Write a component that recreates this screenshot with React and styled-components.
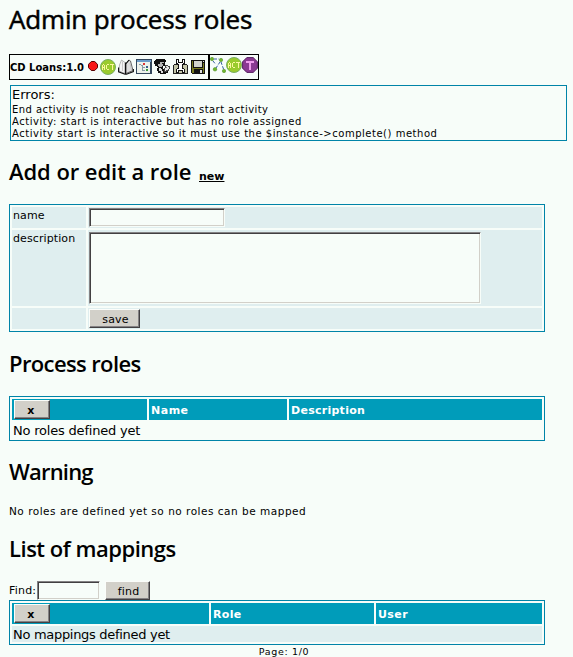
import React from "react";
import styled, { createGlobalStyle } from "styled-components";

const TEAL = "#0084a8";
const HEAD = "#009cba";
const PALE = "#dfeeef";
const PAPER = "#f7fdf9";

const GlobalStyle = createGlobalStyle`
  html, body { margin: 0; background: ${PAPER}; }
  body { overflow: hidden; }
  * { box-sizing: border-box; }
`;

const Page = styled.main`
  width: 573px;
  height: 657px;
  overflow: hidden;
  padding-left: 9px;
  background: ${PAPER};
  color: #000;
  font-family: "DejaVu Sans", Verdana, sans-serif;
  font-size: 11px;
  white-space: nowrap;
`;

const Title = styled.h1`
  margin: 0;
  height: 54px;
  font: 400 26px/38px "Open Sans", "Trebuchet MS", sans-serif;
  letter-spacing: -0.16px;
  -webkit-text-stroke: 0.5px #000;
`;

const Heading = styled.h2`
  margin: 0;
  height: ${(p) => p.$height}px;
  font: 600 22px/${(p) => p.$line}px "Open Sans", "Trebuchet MS", sans-serif;
  letter-spacing: ${(p) => p.$track || 0}px;
`;

const NewLink = styled.a`
  margin-left: 2px;
  color: #000;
  font: bold 11px "DejaVu Sans", sans-serif;
  letter-spacing: 0;
  text-decoration: underline;
`;

const Toolbar = styled.div`
  display: flex;
  width: 250px;
  height: 26px;
  border: 1px solid #000;
`;

const ProcessCell = styled.div`
  display: flex;
  align-items: center;
  width: 200px;
  border-right: 2px solid #000;
  padding-bottom: 1px;
`;

const ProcessName = styled.b`
  width: 78px;
  padding-top: 2px;
  font-size: 10px;
`;

const GraphCell = styled.div`
  display: flex;
  padding-top: 2px;
`;

const Icon = styled.svg`
  display: block;
  flex: none;
  width: ${(p) => p.$w || 16}px;
  height: ${(p) => p.$h || 16}px;
  margin-right: ${(p) => p.$gap || 0}px;
  margin-bottom: ${(p) => p.$lift || 0}px;
`;

const ErrorBox = styled.section`
  width: 557px;
  height: 56px;
  margin: 5px 0 0 1px;
  padding-left: 1px;
  border: 1px solid ${TEAL};
`;

const ErrorTitle = styled.div`
  font-size: 13px;
  line-height: 18px;
`;

const ErrorLine = styled.div`
  font-size: 10px;
  line-height: 12px;
  letter-spacing: ${(p) => p.$track || 0}px;
`;

const Table = styled.div`
  display: grid;
  width: 536px;
  grid-template-columns: ${(p) => p.$cols};
  grid-template-rows: ${(p) => p.$rows};
  gap: 2px;
  padding: 2px;
  border: 1px solid ${TEAL};
`;

const Cell = styled.div`
  background: ${PALE};
  padding: 1px;
`;

const LabelCell = styled(Cell)`
  line-height: 16px;
  letter-spacing: 0.1px;
`;

const HeadCell = styled.div`
  display: flex;
  align-items: center;
  background: ${HEAD};
  color: #fff;
  padding: 1px 2px 0;
  font-weight: bold;
  letter-spacing: ${(p) => p.$track || 0}px;
`;

const EmptyRow = styled.div`
  grid-column: 1 / -1;
  padding-left: 1px;
  background: ${(p) => (p.$shaded ? PALE : "transparent")};
  font-size: 13px;
  line-height: 17px;
  letter-spacing: ${(p) => p.$track || 0}px;
`;

const bevelIn = `
  display: block;
  margin: 0;
  padding: 0;
  outline: 0;
  border: 1px solid;
  border-color: #848284 #f7fdf9 #f7fdf9 #848284;
  border-radius: 0;
  background: ${PAPER};
  box-shadow: inset 1px 1px #424042, inset -1px -1px #d2d0c9;
`;

const TextInput = styled.input`
  ${bevelIn}
  width: ${(p) => p.$w}px;
  height: 19px;
`;

const TextArea = styled.textarea`
  ${bevelIn}
  width: 392px;
  height: 72px;
  margin-top: 1px;
  resize: none;
`;

const Button = styled.button`
  display: block;
  width: ${(p) => p.$w}px;
  height: 19px;
  margin: 0;
  padding: 1px 0 0 2px;
  border: 1px solid;
  border-color: #fbfdfa #424042 #424042 #fbfdfa;
  border-radius: 0;
  background: #d2d0c9;
  box-shadow: inset -1px -1px #848284;
  color: #000;
  font: normal 11px/15px "DejaVu Sans", sans-serif;
  letter-spacing: 0.2px;
`;

const HeadButton = styled(Button)`
  margin-top: -1px;
  padding: 1px 2px 0 0;
  font-weight: bold;
`;

const Note = styled.p`
  margin: 0;
  font-size: 10.5px;
  line-height: 19px;
  letter-spacing: 0.51px;
`;

const FindRow = styled.div`
  display: flex;
  height: 19px;
`;

const FindLabel = styled.label`
  width: 28px;
  line-height: 20px;
  letter-spacing: 0.2px;
`;

const FindButton = styled(Button)`
  margin-left: 5px;
`;

const Pager = styled.footer`
  width: 550px;
  font-size: 9.5px;
  line-height: 13px;
  text-align: center;
  letter-spacing: 0.65px;
`;

const ActIcon = ({ gap }) => (
  <Icon $gap={gap} viewBox="0 0 16 16">
    <circle cx="8" cy="8" r="7.5" fill="#9acb2d" stroke="#79ae62" />
    <path
      d="M2 6H3V5H4V6H5V11H4V9H3V11H2ZM3 6V8H4V6ZM7 5H9V6H7V10H9V11H7V10H6V6H7ZM10 5H14V6H12.5V11H11.5V6H10Z"
      fill="#fbf7a0"
      shapeRendering="crispEdges"
    />
  </Icon>
);

const StopIcon = () => (
  <Icon $w={10} $h={10} $gap={2} $lift={2} viewBox="0 0 10 10">
    <path d="M3.3.5H6.7L9.5 3.3V6.7L6.7 9.5H3.3L.5 6.7V3.3Z" fill="#f81818" stroke="#500" />
  </Icon>
);

const BookIcon = () => (
  <Icon $gap={2} viewBox="0 0 16 16">
    <path d="M1.5 6L3.5 1L7 3.5V14.5L1 12Z" fill="#f4f4f4" stroke="#999" strokeWidth=".7" />
    <path d="M8 5L11 1L12.5 2L15 11.5L8 14.5Z" fill="#ddd" stroke="#444" strokeWidth=".8" />
    <path d="M4.5 2.5V12M12 4L13.5 11" stroke="#bbb" strokeWidth=".8" />
    <path d="M.6 8.5V12.8L7 15.2H8.5L15.4 12.5V10M7.5 3.5V15M8 4.5L11 1" fill="none" stroke="#111" strokeWidth="1.1" />
  </Icon>
);

const WindowIcon = () => (
  <Icon $gap={2} viewBox="0 0 16 16" shapeRendering="crispEdges">
    <path d="M0 0H16V15H0Z" fill="#33475c" />
    <path d="M1 1H15V3H1Z" fill="#6b9bc8" />
    <path d="M1 3H14V14H1Z" fill="#edf1ea" />
    <path d="M3 5H5V6H3ZM5 6H7V7H5ZM6 7H7V12H6ZM7 8H9V9H7ZM7 11H9V12H7Z" fill="#879aa5" />
    <path d="M7 4H9V6H7Z" fill="#d33" />
    <path d="M10 7H12V9H10Z" fill="#38628c" />
    <path d="M10 10H12V12H10Z" fill="#3a9b37" />
  </Icon>
);

const UserIcon = () => (
  <Icon $gap={3} viewBox="0 0 16 16" shapeRendering="crispEdges">
    <path d="M2 0H11V1H12V3H11V7H9V10H12V12H14V14H12V15H6V14H4V12H3V9H4V8H3V7H1V5H0V2H1V1H2Z" fill="#111" />
    <path d="M6 3H10V4H9V7H8V8H5V7H4V5H6Z" fill="#b5b5b5" />
    <path d="M8 4H9V5H8Z" fill="#111" />
    <path d="M5 9H7V10H8V12H9V14H7V12H5Z" fill="#ddd" />
    <path d="M11 6H14V7H16V10H15V12H13V13H10V9H11Z" fill="#444" />
    <path d="M12 7H14V8H15V10H14V11H12V12H11V9H12Z" fill="#e6e6e6" />
    <path d="M12 8H13V9H12Z" fill="#888" />
  </Icon>
);

const ToolsIcon = () => (
  <Icon $w={15} $gap={3} viewBox="0 0 15 16" shapeRendering="crispEdges">
    <path d="M0 6H1V5H3V4H12V5H14V6H15V15H0Z" fill="#222" />
    <path d="M1 6H14V14H1Z" fill="#c3c6a8" />
    <path d="M3 0H6V3H9V0H12V5H11V6H10V9H11V10H12V14H9V12H6V14H3V10H4V9H5V6H4V5H3Z" fill="#111" />
    <path d="M4 1H5V4H10V1H11V4H10V5H9V10H11V13H10V11H5V13H4V10H6V5H5V4H4Z" fill="#fff" />
  </Icon>
);

const SaveIcon = () => (
  <Icon $w={14} $h={14} viewBox="0 0 14 14" shapeRendering="crispEdges">
    <path d="M0 0H14V14H1V13H0Z" fill="#111" />
    <path d="M1 1H2V8H12V3H13V13H1Z" fill="#777b20" />
    <path d="M3 1H11V7H3Z" fill="#d1d3cd" />
    <path d="M3 9H12V13H3Z" fill="#111" />
    <path d="M9 10H11V13H9ZM12 1H13V2H12Z" fill="#ddd" />
  </Icon>
);

const GraphIcon = () => (
  <Icon viewBox="0 0 16 16">
    <path d="M4 2H9M10 5L6 11M11 5L13.5 12M3 4L5 6.5" fill="none" stroke="#355da0" strokeDasharray="3 1.5" />
    <g fill="#70b52b" stroke="#448a25" strokeWidth=".5">
      <circle cx="2" cy="2" r="1.7" />
      <circle cx="11" cy="3" r="1.7" />
      <circle cx="5" cy="12.3" r="1.8" />
      <circle cx="14" cy="14" r="1.7" />
    </g>
  </Icon>
);

const TerminalIcon = () => (
  <Icon viewBox="0 0 16 16">
    <path d="M4.8.6H11.2L15.4 4.8V11.2L11.2 15.4H4.8L.6 11.2V4.8Z" fill="#8b3a93" stroke="#54205e" />
    <path d="M4 4H12V6H9V13H7V6H4Z" fill="#ef9cec" shapeRendering="crispEdges" />
  </Icon>
);

export default function App() {
  return (
    <>
      <GlobalStyle />
      <Page>
        <Title>Admin process roles</Title>
        <Toolbar>
          <ProcessCell>
            <ProcessName>CD Loans:1.0</ProcessName>
            <StopIcon />
            <ActIcon gap={2} />
            <BookIcon />
            <WindowIcon />
            <UserIcon />
            <ToolsIcon />
            <SaveIcon />
          </ProcessCell>
          <GraphCell>
            <GraphIcon />
            <ActIcon />
            <TerminalIcon />
          </GraphCell>
        </Toolbar>
        <ErrorBox>
          <ErrorTitle>Errors:</ErrorTitle>
          <ErrorLine $track={0.43}>End activity is not reachable from start activity</ErrorLine>
          <ErrorLine $track={0.53}>Activity: start is interactive but has no role assigned</ErrorLine>
          <ErrorLine $track={0.52}>Activity start is interactive so it must use the $instance-&gt;complete() method</ErrorLine>
        </ErrorBox>

        <Heading $height={63} $line={61} $track={-0.06}>
          Add or edit a role <NewLink>new</NewLink>
        </Heading>
        <Table $cols="74px 454px" $rows="21px 76px 21px">
          <LabelCell>name</LabelCell>
          <Cell><TextInput $w={136} aria-label="name" /></Cell>
          <LabelCell>description</LabelCell>
          <Cell><TextArea aria-label="description" /></Cell>
          <Cell />
          <Cell><Button $w={51}>save</Button></Cell>
        </Table>

        <Heading $height={64} $line={63} $track={-0.62}>Process roles</Heading>
        <Table $cols="135px 138px 253px" $rows="21px 16px">
          <HeadCell><HeadButton $w={36}>x</HeadButton></HeadCell>
          <HeadCell $track={0.5}>Name</HeadCell>
          <HeadCell $track={0.27}>Description</HeadCell>
          <EmptyRow $track={-0.2}>No roles defined yet</EmptyRow>
        </Table>

        <Heading $height={61} $line={61} $track={-0.8}>Warning</Heading>
        <Note>No roles are defined yet so no roles can be mapped</Note>

        <Heading $height={60} $line={55} $track={-0.48}>List of mappings</Heading>
        <FindRow>
          <FindLabel>Find:</FindLabel>
          <TextInput $w={63} aria-label="Find" />
          <FindButton $w={45}>find</FindButton>
        </FindRow>
        <Table $cols="197px 163px 166px" $rows="21px 16px">
          <HeadCell><HeadButton $w={36}>x</HeadButton></HeadCell>
          <HeadCell $track={0.3}>Role</HeadCell>
          <HeadCell $track={0.4}>User</HeadCell>
          <EmptyRow $shaded $track={-0.3}>No mappings defined yet</EmptyRow>
        </Table>
        <Pager>Page: 1/0</Pager>
      </Page>
    </>
  );
}
